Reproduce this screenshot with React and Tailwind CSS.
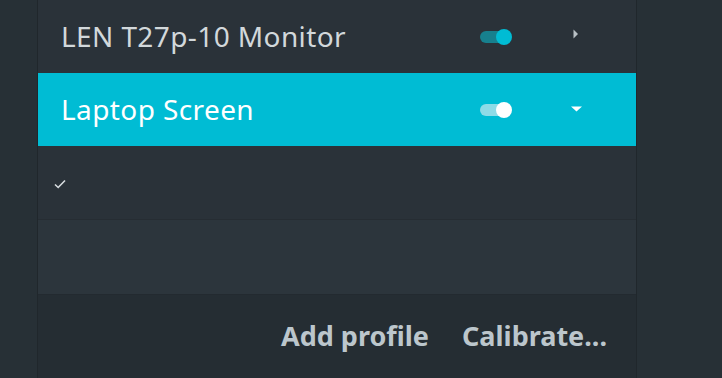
import React from "react";

const Toggle = ({ active }) => (
  <div className="relative w-[32px] h-[16px] flex items-center">
    <div
      className={
        "w-[30px] h-[12px] rounded-full " +
        (active ? "bg-[#8edbe7]" : "bg-[#17808e]")
      }
    />
    <div
      className={
        "absolute right-0 top-0 w-[16px] h-[16px] rounded-full " +
        (active ? "bg-white" : "bg-[#00bcd4]")
      }
    />
  </div>
);

const ArrowRight = () => (
  <svg width="6" height="10" viewBox="0 0 6 10" className="-mt-[6px]">
    <path d="M0.5 0.5 L5 5 L0.5 9.5 Z" fill="#b8c0c5" />
  </svg>
);

const CaretDown = () => (
  <svg width="11" height="6" viewBox="0 0 11 6" className="-mt-[2px]">
    <path d="M0 0.5 L11 0.5 L5.5 5.5 Z" fill="#ffffff" />
  </svg>
);

const Row = ({ name, active }) => (
  <div
    className={
      "h-[73px] flex items-center pl-[23px] " +
      (active ? "bg-[#00bcd4] text-white" : "bg-[#2a3239] text-[#d2d8db]")
    }
  >
    <span className="flex-1 text-[28px] tracking-[0.4px] leading-none -mt-[2px]">{name}</span>
    <Toggle active={active} />
    <div className="w-[124px] flex items-center justify-center pl-[4px]">
      {active ? <CaretDown /> : <ArrowRight />}
    </div>
  </div>
);

const App = () => {
  return (
    <div
      className="w-[722px] h-[378px] bg-[#273036] flex overflow-hidden"
      style={{ fontFamily: '"Noto Sans", "Open Sans", sans-serif' }}
    >
      <div className="ml-[37px] w-[600px] h-full flex flex-col border-x border-[#20272c]">
        <Row name="LEN T27p-10 Monitor" />
        <Row name="Laptop Screen" active />
        <div className="h-[74px] bg-[#2a3239] border-b border-[#262d33] flex items-center pl-[16px]">
          <svg width="12" height="10" viewBox="0 0 12 10" className="mt-[2px]">
            <path
              d="M1 5.5 L4.2 8.5 L11 1.5"
              fill="none"
              stroke="#d8dde0"
              strokeWidth="1.6"
            />
          </svg>
        </div>
        <div className="h-[75px] bg-[#2c353c] border-b border-[#232a30]" />
        <div className="flex-1 bg-[#252d33] flex items-center justify-end pr-[29px] gap-[33px] text-[27px] font-bold text-[#bcc6cc]">
          <span>Add profile</span>
          <span>Calibrate...</span>
        </div>
      </div>
    </div>
  );
};

export default App;
